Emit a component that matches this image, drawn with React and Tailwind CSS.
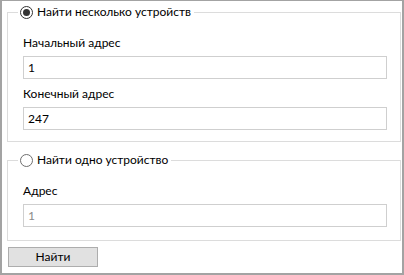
import React from "react";

function Radio({ checked }) {
  return (
    <span className={"inline-flex items-center justify-center w-[13px] h-[13px] rounded-full border bg-white " + (checked ? "border-[#333333]" : "border-[#6e6e6e]")}>
      {checked && <span className="w-[7px] h-[7px] rounded-full bg-[#333333]" />}
    </span>
  );
}

function Field({ label, value, disabled, className }) {
  return (
    <div className={"flex flex-col " + (className || "")}>
      <div className="leading-[16px] h-[16px]">{label}</div>
      <div className={"mt-[5px] h-[23px] w-[364px] border border-[#cfcfcf] bg-white pl-[4px] flex items-center leading-[16px] " + (disabled ? "text-[#8a8a8a]" : "text-black")}>
        {value}
      </div>
    </div>
  );
}

export default function App() {
  return (
    <div className="w-[404px] h-[275px] bg-white border-t border-l-2 border-r-2 border-b-2 border-[#a3a3a3] font-['Lato',sans-serif] text-[12px] text-black flex flex-col">
      <fieldset className="ml-[5px] mr-[1px] mt-[2px] border border-[#dcdcdc] pl-[15px] pr-[13px] pb-[11px]">
        <legend className="ml-[-5px] pl-[2px] pr-[3px] flex items-center gap-[4px] leading-[18px]">
          <Radio checked />
          <span>Найти несколько устройств</span>
        </legend>
        <Field label="Начальный адрес" value="1" className="mt-[14px]" />
        <Field label="Конечный адрес" value="247" className="mt-[7px]" />
      </fieldset>
      <fieldset className="ml-[5px] mr-[1px] mt-[9px] border border-[#dcdcdc] pl-[15px] pr-[13px] pb-[13px]">
        <legend className="ml-[-5px] pl-[2px] pr-[3px] flex items-center gap-[4px] leading-[18px]">
          <Radio />
          <span>Найти одно устройство</span>
        </legend>
        <Field label="Адрес" value="1" disabled className="mt-[14px]" />
      </fieldset>
      <div className="mt-[6px] ml-[6px] w-[90px] h-[20px] border border-[#adadad] bg-[#e1e1e1] flex items-center justify-center leading-[16px]">
        Найти
      </div>
    </div>
  );
}
